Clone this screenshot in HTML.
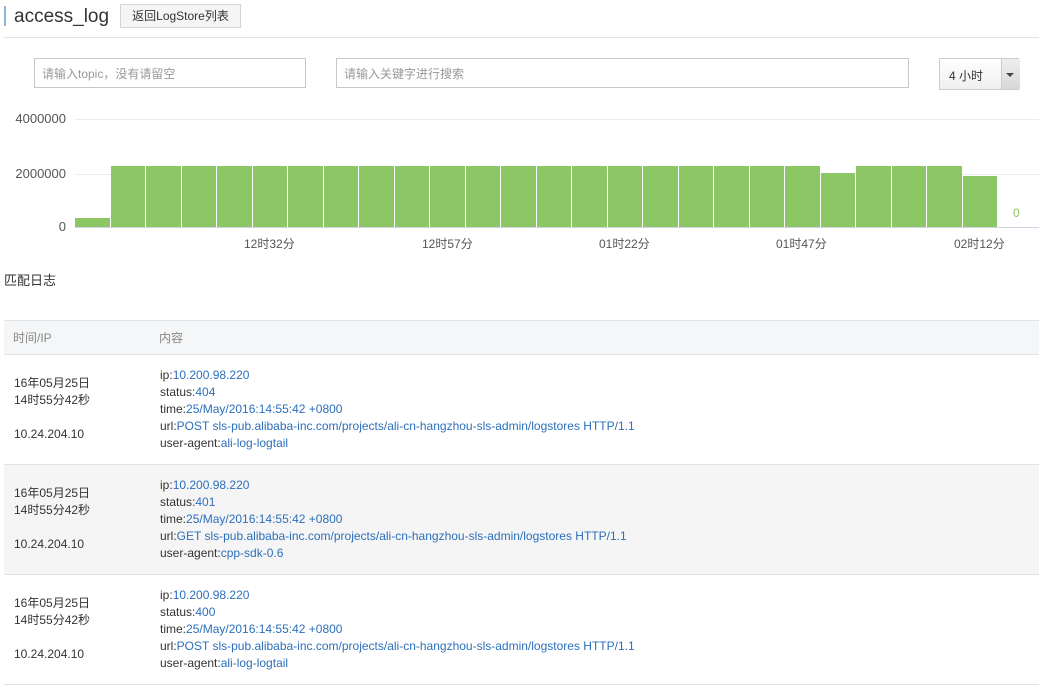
<!DOCTYPE html>
<html><head><meta charset="utf-8"><style>
body{margin:0;width:1039px;height:687px;background:#fff;font-family:"Liberation Sans","Noto Sans CJK SC",sans-serif;color:#333;position:relative;overflow:hidden;font-size:12px}
.a{position:absolute}
.title{left:14px;top:4px;font-size:19px;color:#333;line-height:26px}
.bar0{left:4px;top:6px;width:2px;height:20px;background:#8fb4d9}
.btn{left:120px;top:4px;width:119px;height:22px;border:1px solid #d4d4d4;background:#f5f5f5;font-size:12px;line-height:22px;text-align:center}
.inp{border:1px solid #c8c8c8;height:30px;line-height:30px;color:#999;padding-left:7px;box-sizing:border-box}
.sel{left:939px;top:58px;width:80px;height:32px;border:1px solid #ccc;box-sizing:border-box;background:linear-gradient(#fff,#f0f0f0)}
.bars{left:75px;top:118px;width:930px;height:109px;display:flex;align-items:flex-end}
.bars div{width:34.5px;margin-right:1px;background:#8cc665}
.yl{font-size:12px;color:#555;text-align:right;width:52px;left:14px}
.xl{top:235px;font-size:12px;color:#555}
table{position:absolute;left:4px;top:320px;width:1035px;border-collapse:collapse;font-size:12px}
th{background:#f5f6f7;height:33px;padding:0;text-align:left;font-weight:normal;color:#888;border-top:1px solid #e3e3e3;border-bottom:1px solid #e3e3e3}
td{vertical-align:top;border-bottom:1px solid #e3e3e3;line-height:17px;height:110px;box-sizing:border-box}
tr.g td{background:#f5f5f5}
.b{color:#2c6fbb}
</style></head><body>
<div class="a bar0"></div>
<div class="a title">access_log</div>
<div class="a btn">返回LogStore列表</div>
<div class="a" style="left:4px;top:37px;width:1035px;height:1px;background:#e3e3e3"></div>
<div class="a inp" style="left:34px;top:58px;width:272px">请输入topic，没有请留空</div>
<div class="a inp" style="left:336px;top:58px;width:573px">请输入关键字进行搜索</div>
<div class="a sel"><span class="a" style="left:9px;top:8px;color:#333">4 小时</span><div class="a" style="left:61px;top:0;width:18px;height:30px;background:linear-gradient(#eee,#d8d8d8);border-left:1px solid #ccc"></div><div class="a" style="left:66px;top:14px;border-left:4px solid transparent;border-right:4px solid transparent;border-top:4px solid #444"></div></div>
<div class="a" style="left:75px;top:119px;width:964px;height:1px;background:#ececec"></div>
<div class="a" style="left:75px;top:174px;width:964px;height:1px;background:#ececec"></div>
<div class="a yl" style="top:111px;font-size:13px">4000000</div>
<div class="a yl" style="top:166px;font-size:13px">2000000</div>
<div class="a yl" style="top:219px;font-size:13px">0</div>
<div class="a bars">
<div style="height:9px"></div><div style="height:61px"></div><div style="height:61px"></div><div style="height:61px"></div><div style="height:61px"></div><div style="height:61px"></div><div style="height:61px"></div><div style="height:61px"></div><div style="height:61px"></div><div style="height:61px"></div><div style="height:61px"></div><div style="height:61px"></div><div style="height:61px"></div><div style="height:61px"></div><div style="height:61px"></div><div style="height:61px"></div><div style="height:61px"></div><div style="height:61px"></div><div style="height:61px"></div><div style="height:61px"></div><div style="height:61px"></div><div style="height:54px"></div><div style="height:61px"></div><div style="height:61px"></div><div style="height:61px"></div><div style="height:51px"></div>
</div>
<div class="a" style="left:75px;top:227px;width:964px;height:1px;background:#ccd6e0"></div>
<div class="a" style="left:1013px;top:206px;color:#8cc665">0</div>
<div class="a xl" style="left:244px">12时32分</div>
<div class="a xl" style="left:422px">12时57分</div>
<div class="a xl" style="left:599px">01时22分</div>
<div class="a xl" style="left:776px">01时47分</div>
<div class="a xl" style="left:954px">02时12分</div>
<div class="a" style="left:4px;top:270px;font-size:13px">匹配日志</div>
<table>
<tr><th style="padding-left:9px;width:146px">时间/IP</th><th>内容</th></tr>
<tr><td style="padding:20px 0 0 10px">16年05月25日<br>14时55分42秒<br><div style="height:17px"></div>10.24.204.10</td><td style="padding-top:12px">ip:<span class="b">10.200.98.220</span><br>status:<span class="b">404</span><br>time:<span class="b">25/May/2016:14:55:42 +0800</span><br>url:<span class="b">POST sls-pub.alibaba-inc.com/projects/ali-cn-hangzhou-sls-admin/logstores HTTP/1.1</span><br>user-agent:<span class="b">ali-log-logtail</span></td></tr>
<tr class="g"><td style="padding:20px 0 0 10px">16年05月25日<br>14时55分42秒<br><div style="height:17px"></div>10.24.204.10</td><td style="padding-top:12px">ip:<span class="b">10.200.98.220</span><br>status:<span class="b">401</span><br>time:<span class="b">25/May/2016:14:55:42 +0800</span><br>url:<span class="b">GET sls-pub.alibaba-inc.com/projects/ali-cn-hangzhou-sls-admin/logstores HTTP/1.1</span><br>user-agent:<span class="b">cpp-sdk-0.6</span></td></tr>
<tr><td style="padding:20px 0 0 10px">16年05月25日<br>14时55分42秒<br><div style="height:17px"></div>10.24.204.10</td><td style="padding-top:12px">ip:<span class="b">10.200.98.220</span><br>status:<span class="b">400</span><br>time:<span class="b">25/May/2016:14:55:42 +0800</span><br>url:<span class="b">POST sls-pub.alibaba-inc.com/projects/ali-cn-hangzhou-sls-admin/logstores HTTP/1.1</span><br>user-agent:<span class="b">ali-log-logtail</span></td></tr>
</table>
</body></html>
